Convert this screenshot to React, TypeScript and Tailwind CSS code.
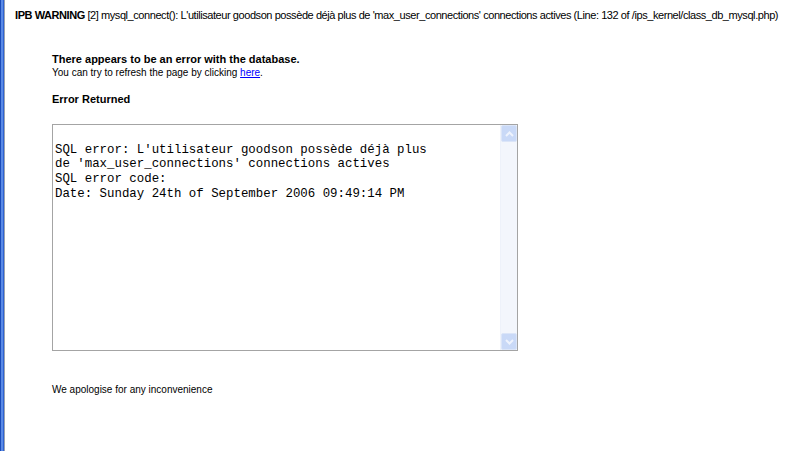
export default function App() {
  const lines = [
    "",
    "SQL error: L'utilisateur goodson possède déjà plus",
    "de 'max_user_connections' connections actives",
    "SQL error code:",
    "Date: Sunday 24th of September 2006 09:49:14 PM",
  ];

  return (
    <div className="flex h-[451px] w-[800px] overflow-hidden bg-white font-['Liberation_Sans',Arial,sans-serif] text-black">
      {/* window frame edge */}
      <div className="flex h-full shrink-0">
        <div className="w-[1px] bg-[#1c4cb8]" />
        <div className="w-[2px] bg-[#5a8ae6]" />
        <div className="w-[1px] bg-[#2f63d2]" />
        <div className="w-[1px] bg-[#9aa3b0]" />
      </div>

      <div className="flex-1 pl-[10px]">
        <p className="mt-[8px] whitespace-nowrap text-[11px] leading-[14px] tracking-[-0.43px]">
          <b>IPB WARNING</b> [2] mysql_connect(): L'utilisateur goodson possède déjà plus de
          'max_user_connections' connections actives (Line: 132 of /ips_kernel/class_db_mysql.php)
        </p>

        <div className="ml-[37px] mt-[31px] text-[10px] leading-[13px]">
          <p className="text-[11px] font-bold">There appears to be an error with the database.</p>
          <p>
            You can try to refresh the page by clicking{" "}
            <a href="#" className="text-[#0000ff] underline">
              here
            </a>
            .
          </p>

          <p className="mt-[14px] text-[11px] font-bold">Error Returned</p>

          <div className="mt-[18px] flex h-[227px] w-[466px] border border-[#a4a4a4] bg-white">
            <div className="flex-1 overflow-hidden pl-[2px] pt-[3px] font-['Liberation_Mono','Courier_New',monospace] text-[12.4px] leading-[14.7px]">
              {lines.map((l, i) => (
                <div key={i} className="h-[14.7px] whitespace-pre">
                  {l}
                </div>
              ))}
            </div>
            {/* scrollbar */}
            <div className="flex w-[17px] flex-col border-l border-[#eef2fa] bg-[#f3f6fc]">
              <div className="flex h-[17px] items-center justify-center rounded-[2px] border border-[#dbe5f8] bg-[#c9d9f7]">
                <svg width="9" height="6" viewBox="0 0 9 6">
                  <path d="M1 5 L4.5 1.5 L8 5" fill="none" stroke="#eef3fd" strokeWidth="2" />
                </svg>
              </div>
              <div className="flex-1" />
              <div className="flex h-[17px] items-center justify-center rounded-[2px] border border-[#dbe5f8] bg-[#c9d9f7]">
                <svg width="9" height="6" viewBox="0 0 9 6">
                  <path d="M1 1 L4.5 4.5 L8 1" fill="none" stroke="#eef3fd" strokeWidth="2" />
                </svg>
              </div>
            </div>
          </div>

          <p className="mt-[32px]">We apologise for any inconvenience</p>
        </div>
      </div>
    </div>
  );
}
